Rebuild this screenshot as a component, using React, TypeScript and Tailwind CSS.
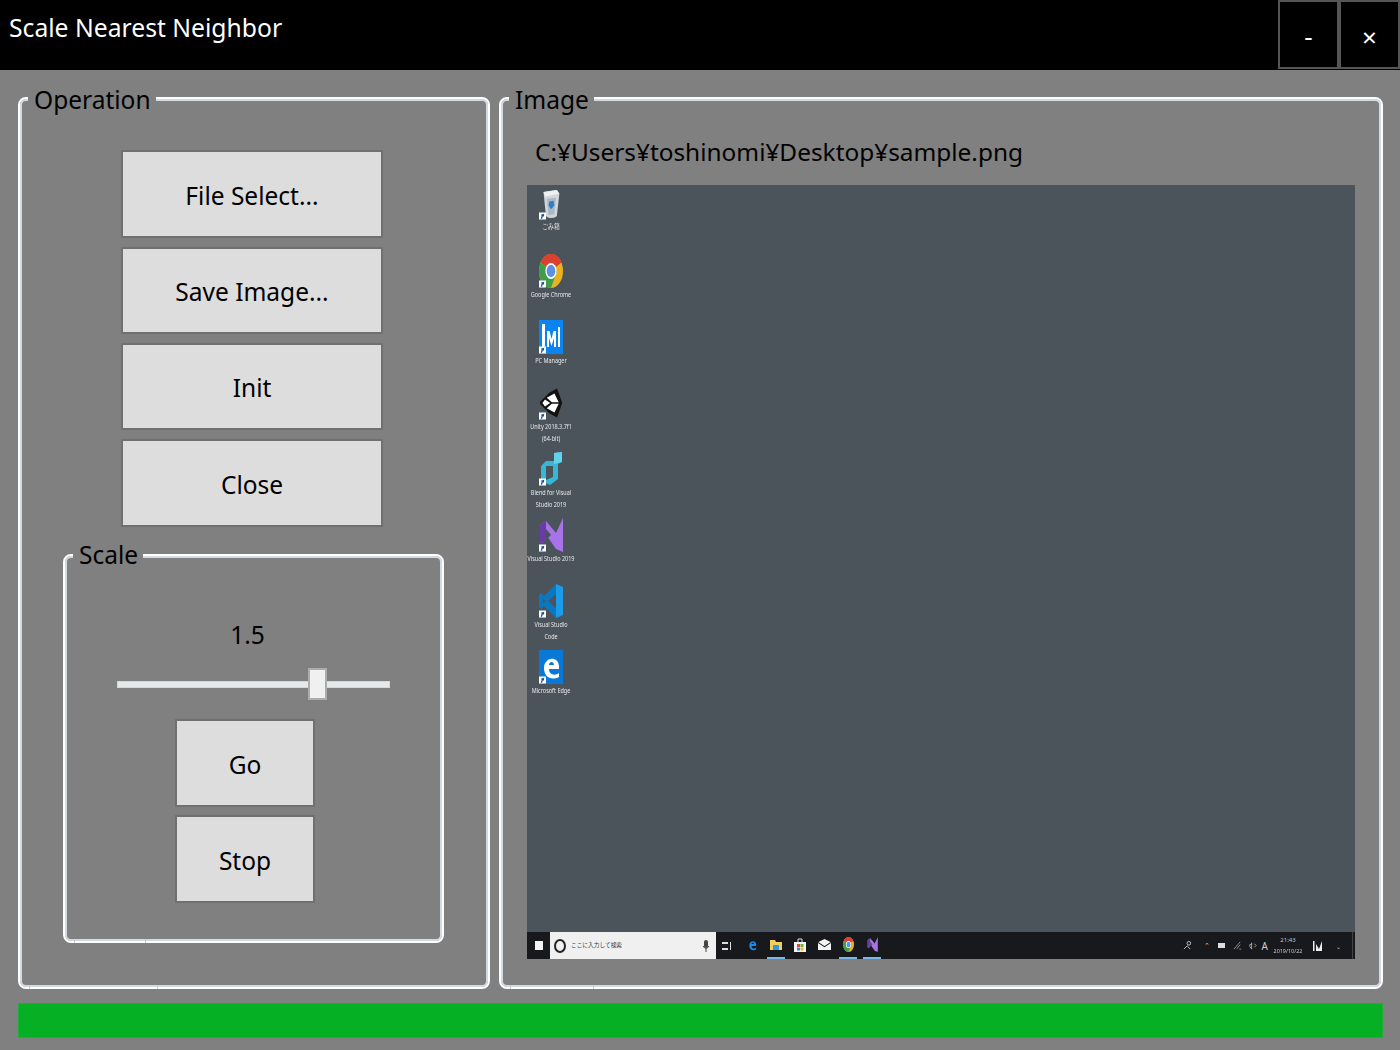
import type { ReactNode } from "react";

const FONT = "font-['Noto_Sans','Open_Sans',sans-serif]";

// WPF style group box, legend sits over the border
const GroupBox = ({ title, className, legendClass, tickLeft, tickRight, children }: { title: string; className: string; legendClass: string; tickLeft: number; tickRight: number; children: ReactNode }) => (
  <div className={`relative rounded-[8px] border-2 border-white shadow-[inset_0_0_0_2px_#d3dae1] ${className}`}>
    <div className={`absolute left-[8px] bg-[#808080] pl-[6px] pr-[5px] text-[24.5px] leading-[34px] text-black ${legendClass}`}>{title}</div>
    <div className="absolute bottom-[-2px] h-[4px] w-px bg-[#c4cad0]" style={{ left: tickLeft }} />
    <div className="absolute bottom-[-2px] h-[4px] w-px bg-[#c4cad0]" style={{ left: tickRight }} />
    {children}
  </div>
);

const GrayButton = ({ label, className }: { label: string; className: string }) => (
  <button className={`flex items-center justify-center border-2 border-[#707070] bg-[#dddddd] pt-[4px] text-[24.5px] text-black ${className}`}>
    {label}
  </button>
);

const Shortcut = () => (
  <svg viewBox="0 0 8 8" className="absolute bottom-0 left-0 h-[8px] w-[7px]">
    <rect width="8" height="8" fill="#fff" />
    <path d="M2 7 L3 3.5 L2 2.5 L6 1.5 L5.5 5 L4.5 4 L3.5 7Z" fill="#1d4f9c" />
  </svg>
);

const RecycleBin = () => (
  <svg viewBox="0 0 24 32" preserveAspectRatio="none" className="h-[31px] w-[20px]">
    <path d="M3 3 L19 1 L22 5 L19 28 Q12 32 6 28 Z" fill="#cfd6dc" />
    <path d="M3 3 L19 1 L22 5 L5 8Z" fill="#eef1f3" />
    <path d="M7 10 L18 9 L16 26 L9 27Z" fill="#aeb8c0" />
    <path d="M10 13 L15 12 L16 17 L12 21 L9 17Z" fill="#2b7fd0" />
  </svg>
);

const Chrome = ({ small }: { small?: boolean }) => (
  <svg viewBox="0 0 32 32" preserveAspectRatio="none" className={small ? "h-[15px] w-[11px]" : "h-[34px] w-[24px]"}>
    <circle cx="16" cy="16" r="16" fill="#e9b320" />
    <path d="M16 16 L2.1 8 A16 16 0 0 1 30 8 Z" fill="#d8402f" />
    <path d="M16 16 L2.1 8 A16 16 0 0 0 16 32 L24 16 Z" fill="#3f9e4a" />
    <circle cx="16" cy="16" r="7.5" fill="#fff" />
    <circle cx="16" cy="16" r="5.8" fill="#5b8fe8" />
  </svg>
);

const PcManager = () => (
  <svg viewBox="0 0 24 34" className="h-[34px] w-[24px]">
    <rect width="24" height="34" fill="#0a84f0" />
    <path d="M3 4 H6 V26 L3 28Z M8 11 H10.5 L12.5 19 L14.5 11 H17 V27 H15 V18 L12.5 26 L10 18 V27 H8Z M19 7 H21 V27 H19Z" fill="#fff" />
  </svg>
);

const Unity = () => (
  <svg viewBox="0 0 28 34" className="h-[34px] w-[28px]">
    <path d="M21 0 L24 8 L27 17 L24 26 L21 34 L12 29 L2 19 L1 17 L2 15 L12 5Z" fill="#111" />
    <path d="M18 6 L23 16 H15 L9 11Z M23 18 L18 28 L9 23 L15 18Z M7 13 L13 17 L7 21 L4 17Z" fill="#fff" />
  </svg>
);

const Blend = () => (
  <svg viewBox="0 0 24 34" className="h-[34px] w-[24px]">
    <path d="M15 1 L23 0 V10 L19 12 V27 L11 33 L2 29 V14 L7 9 H15Z" fill="#37b6d6" />
    <path d="M7 14 H14 V25 L7 28Z" fill="#4c545b" />
    <path d="M15 1 L23 0 V10 L15 12Z" fill="#62d3eb" />
  </svg>
);

const VisualStudio = ({ small }: { small?: boolean }) => (
  <svg viewBox="0 0 24 34" className={small ? "h-[15px] w-[11px]" : "h-[34px] w-[24px]"}>
    <path d="M1 7 L7 3 L17 15 L24 0 V34 L17 31 L8 18 L4 25 L1 24Z" fill="#a873e8" />
    <path d="M1 7 L7 3 V22 L4 25 L1 24Z" fill="#6a3aa8" />
    <path d="M7 11 L12 17 L7 22Z" fill="#4c545b" />
  </svg>
);

const VsCode = () => (
  <svg viewBox="0 0 24 34" className="h-[34px] w-[24px]">
    <path d="M17 0 L24 3 V31 L17 34Z" fill="#1b9be8" />
    <path d="M17 0 V10 L9 17 L17 24 V34 L5 22 L2 25 L0 23 V11 L2 9 L5 12Z" fill="#0b77bf" />
    <path d="M4 15 L7 17 L4 19Z" fill="#4c545b" />
  </svg>
);

const Edge = ({ tile }: { tile?: boolean }) => (
  <svg viewBox="0 0 24 34" className={tile ? "h-[34px] w-[24px]" : "h-[16px] w-[11px]"}>
    {tile && <rect width="24" height="34" fill="#0a78d7" />}
    <path
      d="M5 18 C5 7 19 5 20 16 V19 H10 C10 25 16 26 20 23 V27 C12 31 5 27 5 18Z M10 15 H15 C15 11 10 11 10 15Z"
      fill={tile ? "#fff" : "#1a8ae8"}
      fillRule="evenodd"
    />
  </svg>
);

const DesktopIcon = ({ icon, label, className }: { icon: ReactNode; label: string; className?: string }) => (
  <div className={`flex h-[66px] w-[48px] flex-col items-center ${className ?? ""}`}>
    <div className="relative flex w-[24px] justify-center">
      {icon}
      <Shortcut />
    </div>
    <span className="w-[80px] shrink-0 scale-x-[.73] whitespace-pre-line text-center text-[7.5px] leading-[12px] text-[#e6e8ea] blur-[0.3px]">{label}</span>
  </div>
);

const TaskItem = ({ active, children }: { active?: boolean; children: ReactNode }) => (
  <div className={`mx-[3px] flex h-[27px] w-[18px] items-center justify-center border-b-2 ${active ? "border-[#76b9ed]" : "border-transparent"}`}>
    {children}
  </div>
);

const Taskbar = () => (
  <div className="flex h-[27px] shrink-0 items-center bg-[#17191c] pr-[2px]">
    <div className="ml-[8px] h-[9px] w-[8px] bg-[#f4f4f4]" />
    <div className="ml-[7px] flex h-full w-[166px] items-center bg-[#f0f0f0] pl-[4px]">
      <div className="h-[14px] w-[12px] rounded-[50%] border-2 border-[#222]" />
      <span className="ml-[5px] font-['Noto_Sans_CJK_JP',sans-serif] text-[5.7px] text-[#333]">ここに入力して検索</span>
      <svg viewBox="0 0 8 12" className="ml-auto mr-[6px] h-[12px] w-[8px]">
        <rect x="2" y="0" width="4" height="8" rx="2" fill="#444" />
        <path d="M1 6 Q4 11 7 6 M4 9 V12" stroke="#444" fill="none" />
      </svg>
    </div>
    <svg viewBox="0 0 10 10" className="ml-[6px] h-[10px] w-[10px]">
      <path d="M0 1 H6 V3 H0Z M0 7 H6 V9 H0Z M8 1 H9 V9 H8Z" fill="#ddd" />
    </svg>
    <div className="ml-[8px] flex">
      <TaskItem><Edge /></TaskItem>
      <TaskItem active>
        <svg viewBox="0 0 12 12" className="h-[12px] w-[12px]">
          <path d="M0 1 H5 L6 3 H12 V11 H0Z" fill="#f2cd62" />
          <rect x="3" y="6" width="6" height="5" fill="#2f9ad8" />
        </svg>
      </TaskItem>
      <TaskItem>
        <svg viewBox="0 0 12 14" className="h-[14px] w-[12px]">
          <path d="M4 4 V1 H8 V4" fill="none" stroke="#ddd" />
          <rect y="4" width="12" height="10" fill="#f4f4f4" />
          <rect x="3" y="6" width="3" height="3" fill="#e0472f" />
          <rect x="6.5" y="6" width="3" height="3" fill="#6cb33f" />
          <rect x="3" y="9.5" width="3" height="3" fill="#2f8ae0" />
          <rect x="6.5" y="9.5" width="3" height="3" fill="#f2b71c" />
        </svg>
      </TaskItem>
      <TaskItem>
        <svg viewBox="0 0 12 10" className="h-[11px] w-[13px]">
          <path d="M0 3 L6 0 L12 3 V10 H0Z" fill="#f4f4f4" />
          <path d="M0 3 L6 7 L12 3" fill="none" stroke="#222" />
        </svg>
      </TaskItem>
      <TaskItem active><Chrome small /></TaskItem>
      <TaskItem active><VisualStudio small /></TaskItem>
    </div>
    <div className="ml-auto flex items-center text-[#c8cacc]">
      <svg viewBox="0 0 10 10" className="h-[9px] w-[9px]">
        <circle cx="6.5" cy="2.5" r="2" fill="none" stroke="#ccc" />
        <path d="M5 5 L1 9 M5 6 L8 9" stroke="#ccc" />
      </svg>
      <span className="ml-[12px] text-[7px] leading-none">⌃</span>
      <div className="ml-[8px] h-[5px] w-[7px] bg-[#ddd]" />
      <svg viewBox="0 0 10 10" className="ml-[8px] h-[9px] w-[9px]">
        <path d="M1 9 L8 1 M4 9 L8 4 M7 9 H9" stroke="#999" />
      </svg>
      <svg viewBox="0 0 10 10" className="ml-[6px] h-[9px] w-[9px]">
        <path d="M2 4 H4 V2 V9 L2 6Z M7 3 L9 5 L7 7" stroke="#aaa" fill="none" />
      </svg>
      <span className="ml-[5px] text-[10px] leading-none">A</span>
      <div className="ml-[4px] flex w-[32px] flex-col items-center text-[6px] leading-[11px]">
        <span>21:43</span>
        <span className="scale-x-90 whitespace-nowrap">2019/10/22</span>
      </div>
      <svg viewBox="0 0 10 10" className="ml-[9px] h-[10px] w-[10px]">
        <path d="M0 0 H1.5 V10 H0Z M3 3 L6 8 L9 0 V10 H3Z" fill="#eee" />
      </svg>
      <span className="ml-[13px] mr-[11px] mt-[3px] text-[6px] leading-none">⌄</span>
      <div className="h-[27px] w-px bg-[#444]" />
    </div>
  </div>
);

export default function App() {
  return (
    <div className={`flex h-[1050px] w-[1400px] flex-col overflow-hidden bg-[#808080] ${FONT}`}>
      <header className="flex h-[70px] shrink-0 bg-black text-white">
        <h1 className="pl-[9px] pt-[10px] text-[24.7px] font-normal leading-[36px]">Scale Nearest Neighbor</h1>
        <div className="ml-auto flex h-[69px]">
          <button className="flex w-[61px] items-center justify-center border-2 border-[#555] pt-[2px] text-[26px] leading-none">-</button>
          <button className="flex w-[61px] items-center justify-center border-2 border-[#555] pt-[4px] text-[26px] leading-none">×</button>
        </div>
      </header>

      <main className="flex gap-[9px] pl-[18px] pt-[27px]">
        <GroupBox title="Operation" legendClass="top-[-16px]" className="h-[892px] w-[472px] shrink-0 pl-[101px] pt-[51px]" tickLeft={9} tickRight={137}>
          <div className="flex w-[262px] flex-col gap-[9px]">
            <GrayButton label="File Select..." className="h-[88px]" />
            <GrayButton label="Save Image..." className="h-[87px]" />
            <GrayButton label="Init" className="h-[87px]" />
            <GrayButton label="Close" className="h-[88px]" />
          </div>
          <div className="ml-[-58px] mt-[27px] w-[381px]">
            <GroupBox title="Scale" legendClass="top-[-18px]" className="h-[389px] w-[381px]" tickLeft={9} tickRight={80}>
              <div className="pl-[52px] pt-[61px]">
                <div className="w-[273px] pr-[12px] text-center text-[24.5px] leading-[36px] text-black">1.5</div>
                <div className="relative mt-[15px] flex h-[32px] w-[273px] items-center">
                  <div className="h-[7px] w-full border border-[#d6d6d6] bg-[#e7eaea]" />
                  <div className="absolute left-[191px] top-0 h-[32px] w-[19px] border-2 border-[#acacac] bg-[#f0f0f0]" />
                </div>
                <div className="ml-[58px] mt-[19px] flex w-[140px] flex-col gap-[8px]">
                  <GrayButton label="Go" className="h-[88px]" />
                  <GrayButton label="Stop" className="h-[88px]" />
                </div>
              </div>
            </GroupBox>
          </div>
        </GroupBox>

        <GroupBox title="Image" legendClass="top-[-16px]" className="flex h-[892px] w-[884px] shrink-0 flex-col pl-[26px] pr-[26px]" tickLeft={9} tickRight={92}>
          <div className="pl-[8px] pt-[35px] text-[24.4px] leading-[36px] text-black">C:¥Users¥toshinomi¥Desktop¥sample.png</div>
          <div className="mt-[15px] flex h-[774px] w-[828px] flex-col bg-[#4c545b]">
            <div className="flex flex-1 flex-col pt-[3px]">
              <DesktopIcon icon={<RecycleBin />} label="ごみ箱" className="pt-[1px]" />
              <DesktopIcon icon={<Chrome />} label="Google Chrome" />
              <DesktopIcon icon={<PcManager />} label="PC Manager" />
              <DesktopIcon icon={<Unity />} label={"Unity 2018.3.7f1\n(64-bit)"} />
              <DesktopIcon icon={<Blend />} label={"Blend for Visual\nStudio 2019"} />
              <DesktopIcon icon={<VisualStudio />} label="Visual Studio 2019" />
              <DesktopIcon icon={<VsCode />} label={"Visual Studio\nCode"} />
              <DesktopIcon icon={<Edge tile />} label="Microsoft Edge" />
            </div>
            <Taskbar />
          </div>
        </GroupBox>
      </main>

      <div className="ml-[18px] mt-[14px] h-[35px] w-[1365px] border border-[#1fae3a] bg-[#06b025]" />
    </div>
  );
}
